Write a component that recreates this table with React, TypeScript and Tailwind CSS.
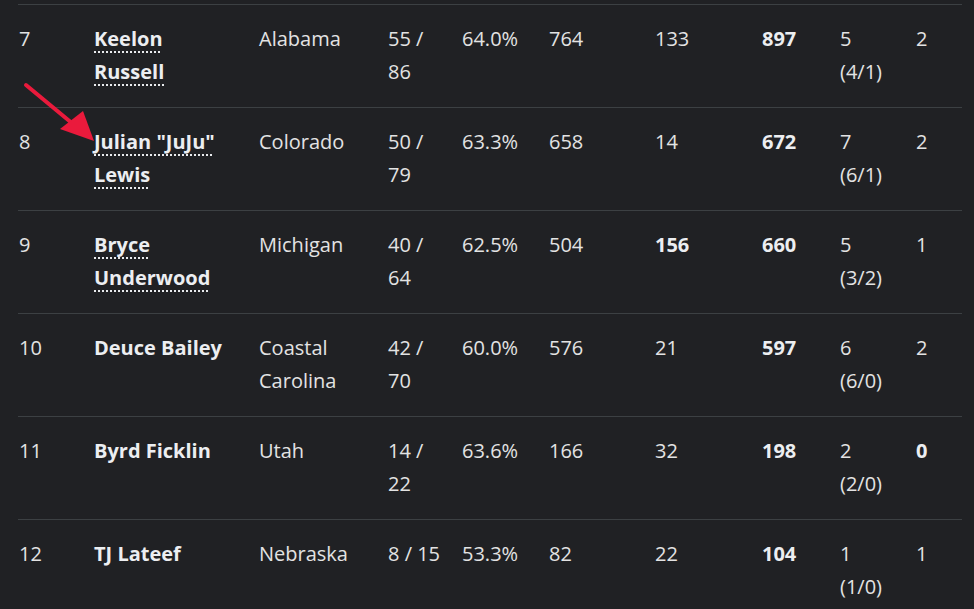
type Row = {
  rank: string;
  name: string;
  link: boolean;
  school: string;
  comp: string;
  pct: string;
  yds: string;
  td: string;
  tdBold?: boolean;
  total: string;
  sacks: string;
  last: string;
  lastBold?: boolean;
};

const rows: Row[] = [
  { rank: "7", name: "Keelon Russell", link: true, school: "Alabama", comp: "55 / 86", pct: "64.0%", yds: "764", td: "133", total: "897", sacks: "5 (4/1)", last: "2" },
  { rank: "8", name: 'Julian "JuJu" Lewis', link: true, school: "Colorado", comp: "50 / 79", pct: "63.3%", yds: "658", td: "14", total: "672", sacks: "7 (6/1)", last: "2" },
  { rank: "9", name: "Bryce Underwood", link: true, school: "Michigan", comp: "40 / 64", pct: "62.5%", yds: "504", td: "156", tdBold: true, total: "660", sacks: "5 (3/2)", last: "1" },
  { rank: "10", name: "Deuce Bailey", link: false, school: "Coastal Carolina", comp: "42 / 70", pct: "60.0%", yds: "576", td: "21", total: "597", sacks: "6 (6/0)", last: "2" },
  { rank: "11", name: "Byrd Ficklin", link: false, school: "Utah", comp: "14 / 22", pct: "63.6%", yds: "166", td: "32", total: "198", sacks: "2 (2/0)", last: "0", lastBold: true },
  { rank: "12", name: "TJ Lateef", link: false, school: "Nebraska", comp: "8 / 15", pct: "53.3%", yds: "82", td: "22", total: "104", sacks: "1 (1/0)", last: "1" },
];

function Arrow() {
  return (
    <svg className="absolute left-0 top-0 pointer-events-none" width="120" height="160" viewBox="0 0 120 160">
      <line x1="26" y1="85" x2="73" y2="124" stroke="#ea1a3c" strokeWidth="4" strokeLinecap="round" />
      <polygon points="94,141 60,129 83,111" fill="#ea1a3c" />
    </svg>
  );
}

export default function App() {
  return (
    <div
      className="relative w-[974px] h-[609px] overflow-hidden bg-[#202124] text-[#e3e3e3] text-[20px] leading-[33px] pt-[4px]"
      style={{ fontFamily: '"Open Sans", sans-serif' }}
    >
      <div className="mx-[18px] w-[944px]">
        {rows.map((r) => (
          <div
            key={r.rank}
            className="grid grid-cols-[76px_165px_129px_74px_87px_106px_107px_78px_76px_46px] border-t border-[#3c4043] pt-[17px] pb-[19px]"
          >
            <div className="pl-px">{r.rank}</div>
            <div className="pr-6 font-bold text-[#eceef1]">
              {r.link ? (
                <span className="underline decoration-dotted decoration-2 underline-offset-[5px] decoration-[#e8eaed]">
                  {r.name}
                </span>
              ) : (
                r.name
              )}
            </div>
            <div className="pr-5">{r.school}</div>
            <div className="pr-[18px]">{r.comp}</div>
            <div className="pr-4">{r.pct}</div>
            <div className="pr-4">{r.yds}</div>
            <div className={r.tdBold ? "pr-4 font-bold text-[#eceef1]" : "pr-4"}>{r.td}</div>
            <div className="pr-4 font-bold text-[#eceef1]">{r.total}</div>
            <div className="pr-5">{r.sacks}</div>
            <div className={r.lastBold ? "font-bold text-[#eceef1]" : ""}>{r.last}</div>
          </div>
        ))}
      </div>
      <Arrow />
    </div>
  );
}
